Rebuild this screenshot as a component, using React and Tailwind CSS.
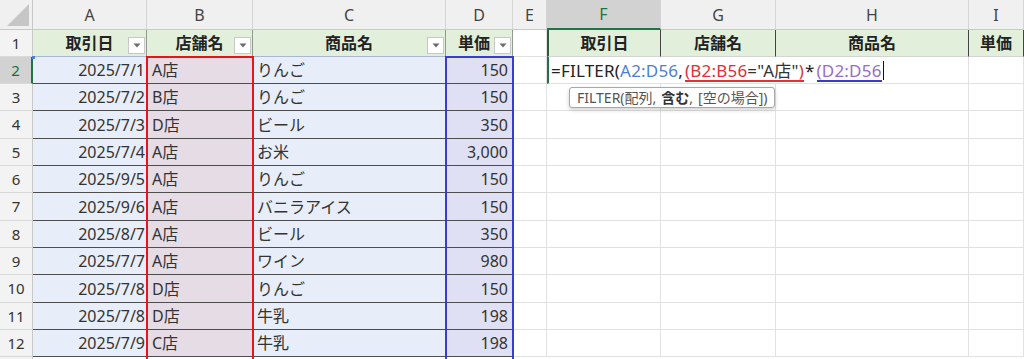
import React from 'react';

const cols = [
  { key: 'A', w: 114 },
  { key: 'B', w: 106 },
  { key: 'C', w: 193 },
  { key: 'D', w: 67 },
  { key: 'E', w: 34 },
  { key: 'F', w: 114 },
  { key: 'G', w: 115 },
  { key: 'H', w: 193 },
  { key: 'I', w: 55 },
];

const rows = [
  ['2025/7/1', 'A店', 'りんご', '150'],
  ['2025/7/2', 'B店', 'りんご', '150'],
  ['2025/7/3', 'D店', 'ビール', '350'],
  ['2025/7/4', 'A店', 'お米', '3,000'],
  ['2025/9/5', 'A店', 'りんご', '150'],
  ['2025/9/6', 'A店', 'バニラアイス', '150'],
  ['2025/8/7', 'A店', 'ビール', '350'],
  ['2025/7/7', 'A店', 'ワイン', '980'],
  ['2025/7/8', 'D店', 'りんご', '150'],
  ['2025/7/8', 'D店', '牛乳', '198'],
  ['2025/7/9', 'C店', '牛乳', '198'],
];

const heights = [27, 27, 28, 27, 27, 28, 27, 27, 28, 27, 27];

function Dropdown() {
  return (
    <div className="absolute right-[1px] bottom-[2px] w-[17px] h-[17px] bg-white border border-[#c8c8c8] flex items-center justify-center">
      <svg width="8" height="5" viewBox="0 0 8 5">
        <path d="M0.5 0.5 L7.5 0.5 L4 4.5 Z" fill="#6b6b6b" />
      </svg>
    </div>
  );
}

function RowHeader({ n, h, selected }) {
  return (
    <div
      className={
        'w-[33px] shrink-0 flex items-center justify-center text-[15px] border-b border-[#d8d8d8] ' +
        (selected
          ? 'bg-[#d2d2d2] text-[#1e6b3c] border-r-2 border-r-[#217346]'
          : 'bg-[#f3f3f3] text-[#333] border-r border-r-[#c8c8c8]')
      }
      style={{ height: h }}
    >
      {n}
    </div>
  );
}

export default function App() {
  return (
    <div className="w-[1024px] h-[359px] overflow-hidden bg-white relative font-['Noto_Sans','Noto_Sans_CJK_JP',sans-serif] text-[#333] leading-none">
      {/* column headers */}
      <div className="flex h-[30px]">
        <div className="w-[33px] shrink-0 bg-[#f0f0f0] border-r border-b border-[#c8c8c8] flex items-end justify-end pr-[3px] pb-[3px]">
          <svg width="22" height="22" viewBox="0 0 22 22">
            <path d="M22 0 L22 22 L0 22 Z" fill="#c6c6c6" />
          </svg>
        </div>
        {cols.map((c) => (
          <div
            key={c.key}
            className={
              'shrink-0 flex items-center justify-center text-[16px] border-r border-r-[#d4d4d4] ' +
              (c.key === 'F'
                ? 'bg-[#d2d2d2] text-[#217346] border-b-2 border-b-[#217346]'
                : 'bg-[#f0f0f0] text-[#444] border-b border-b-[#c8c8c8]')
            }
            style={{ width: c.w }}
          >
            {c.key}
          </div>
        ))}
      </div>

      {/* row 1 */}
      <div className="flex h-[27px]">
        <RowHeader n={1} h={27} />
        {['取引日', '店舗名', '商品名', '単価'].map((t, i) => (
          <div
            key={t}
            className={
              'relative shrink-0 bg-[#e2efda] border-r border-r-[#8e9a8a] border-b border-b-[#a9b8cf] flex items-center justify-center font-bold text-[16px] text-[#222] ' +
              (i === 3 ? 'pr-[10px]' : '')
            }
            style={{ width: cols[i].w }}
          >
            {t}
            <Dropdown />
          </div>
        ))}
        <div className="w-[34px] shrink-0 border-r border-b border-[#e1e1e1]" />
        {['取引日', '店舗名', '商品名', '単価'].map((t, i) => (
          <div
            key={'o' + t}
            className={
              'shrink-0 bg-[#e2efda] border-r border-r-[#444] border-b border-b-[#d4d4d4] flex items-center justify-center font-bold text-[16px] text-[#222] ' +
              (i === 0 ? 'border-l-2 border-l-[#2f5b3d]' : '')
            }
            style={{ width: cols[5 + i].w }}
          >
            {t}
          </div>
        ))}
      </div>

      {/* data rows */}
      {rows.map((r, idx) => {
        const h = heights[idx];
        const n = idx + 2;
        return (
          <div key={n} className="flex" style={{ height: h }}>
            <RowHeader n={n} h={h} selected={n === 2} />
            <div className="shrink-0 bg-[#e8eef9] border-b border-b-[#4d4d4d] flex items-center justify-end pr-[2px] text-[16px]" style={{ width: 114 }}>
              {r[0]}
            </div>
            <div className="shrink-0 bg-[#e6dce6] border-b border-b-[#4d4d4d] flex items-center pl-[5px] text-[16px]" style={{ width: 106 }}>
              {r[1]}
            </div>
            <div className="shrink-0 bg-[#e8eef9] border-b border-b-[#4d4d4d] flex items-center pl-[4px] text-[16px]" style={{ width: 193 }}>
              {r[2]}
            </div>
            <div className="shrink-0 bg-[#dfe0f3] border-b border-b-[#4d4d4d] flex items-center justify-end pr-[5px] text-[16px]" style={{ width: 67 }}>
              {r[3]}
            </div>
            <div className="w-[34px] shrink-0 border-r border-b border-[#e1e1e1]" />
            {n === 2 ? (
              <div className="shrink-0 border-l-2 border-l-[#217346] border-r border-r-[#e1e1e1] border-b border-b-[#e1e1e1] flex items-center pl-[2px] text-[17px] tracking-[0.2px] whitespace-nowrap text-[#222]" style={{ width: 422 }}>
                <span>=FILTER(</span>
                <span className="text-[#4f7fd0]">A2:D56</span>
                <span>,</span>
                <span className="text-[#e0303a] border-b-2 border-b-[#e0303a] pb-[1px] -mb-[3px] ml-[2px]">
                  (B2:B56<span className="text-[#333]">="A店"</span>)
                </span>
                <span className="ml-[1px]">*</span>
                <span className="text-[#9a6cc8] border-b-2 border-b-[#3b3bd0] pb-[1px] -mb-[3px] ml-[2px]">(D2:D56</span>
                <span className="w-[1px] h-[19px] bg-[#111] ml-[1px]" />
              </div>
            ) : (
              ['F', 'G', 'H'].map((k) => (
                <div key={k} className="shrink-0 border-r border-b border-[#e1e1e1]" style={{ width: cols.find((c) => c.key === k).w }} />
              ))
            )}
            <div className="w-[55px] shrink-0 border-r border-b border-[#e1e1e1]" />
          </div>
        );
      })}
      <div className="flex h-[10px]">
        <div className="w-[33px] h-[10px] shrink-0 bg-[#f3f3f3] border-r border-[#c8c8c8]" />
      </div>

      {/* reference outlines */}
      <div className="absolute left-[146px] top-[56px] w-[108px] h-[320px] border-2 border-[#e8141c]" />
      <div className="absolute left-[445px] top-[56px] w-[69px] h-[320px] border-2 border-[#3a3ad4]" />
      <div className="absolute left-[32px] top-[56px] w-[3px] h-[3px] bg-[#4f7fd0]" />

      {/* tooltip */}
      <div className="absolute left-[569px] top-[87px] h-[21px] px-[7px] flex items-center bg-white border border-[#a8a8a8] rounded-[3px] shadow-[0_2px_4px_rgba(0,0,0,0.18)] text-[14px] text-[#555] whitespace-nowrap">
        <span>FILTER(配列,</span>
        <span className="ml-[5px] font-bold text-[#333]">含む</span>
        <span>,</span>
        <span className="ml-[5px]">[空の場合])</span>
      </div>
    </div>
  );
}
